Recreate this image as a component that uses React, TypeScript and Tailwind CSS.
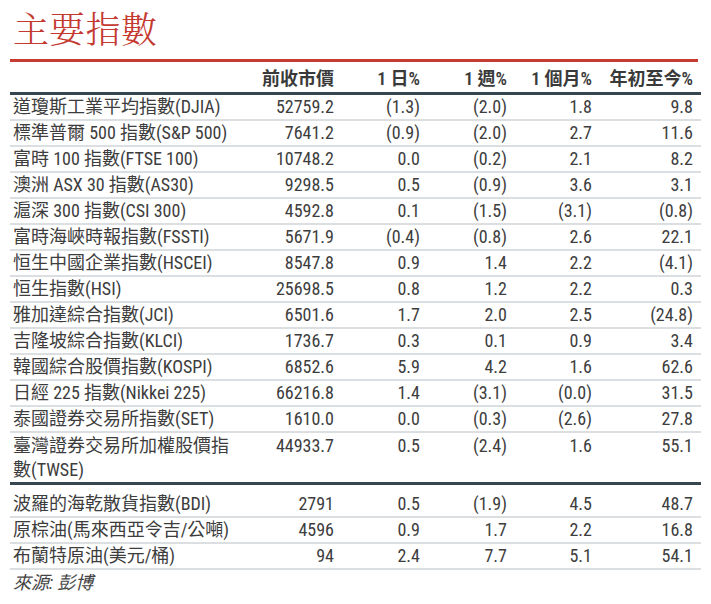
const rows = [
  ["道瓊斯工業平均指數(DJIA)", "52759.2", "(1.3)", "(2.0)", "1.8", "9.8"],
  ["標準普爾 500 指數(S&P 500)", "7641.2", "(0.9)", "(2.0)", "2.7", "11.6"],
  ["富時 100 指數(FTSE 100)", "10748.2", "0.0", "(0.2)", "2.1", "8.2"],
  ["澳洲 ASX 30 指數(AS30)", "9298.5", "0.5", "(0.9)", "3.6", "3.1"],
  ["滬深 300 指數(CSI 300)", "4592.8", "0.1", "(1.5)", "(3.1)", "(0.8)"],
  ["富時海峽時報指數(FSSTI)", "5671.9", "(0.4)", "(0.8)", "2.6", "22.1"],
  ["恒生中國企業指數(HSCEI)", "8547.8", "0.9", "1.4", "2.2", "(4.1)"],
  ["恒生指數(HSI)", "25698.5", "0.8", "1.2", "2.2", "0.3"],
  ["雅加達綜合指數(JCI)", "6501.6", "1.7", "2.0", "2.5", "(24.8)"],
  ["吉隆坡綜合指數(KLCI)", "1736.7", "0.3", "0.1", "0.9", "3.4"],
  ["韓國綜合股價指數(KOSPI)", "6852.6", "5.9", "4.2", "1.6", "62.6"],
  ["日經 225 指數(Nikkei 225)", "66216.8", "1.4", "(3.1)", "(0.0)", "31.5"],
  ["泰國證券交易所指數(SET)", "1610.0", "0.0", "(0.3)", "(2.6)", "27.8"],
];

const commodities = [
  ["波羅的海乾散貨指數(BDI)", "2791", "0.5", "(1.9)", "4.5", "48.7"],
  ["原棕油(馬來西亞令吉/公噸)", "4596", "0.9", "1.7", "2.2", "16.8"],
  ["布蘭特原油(美元/桶)", "94", "2.4", "7.7", "5.1", "54.1"],
];

const cols = "grid grid-cols-[228px_101px_86px_87px_85px_101px]";

function Row({ cells, extra = "" }: { cells: string[]; extra?: string }) {
  return (
    <div className={`${cols} border-b-2 border-[#dcdfe2] leading-[24px] ${extra}`}>
      <div className="pl-[3px] whitespace-nowrap">{cells[0]}</div>
      {cells.slice(1).map((c, i) => (
        <div key={i} className="pr-[5px] text-right">
          {c}
        </div>
      ))}
    </div>
  );
}

export default function App() {
  return (
    <div className="w-[711px] h-[604px] bg-white px-[10px] pt-[10px] text-[#3d3d3d] text-[18px] [font-stretch:75%] font-['Roboto','Noto_Sans_CJK_TC',sans-serif]">
      <h1 className="pl-[3px] text-[36px] leading-[36px] text-[#c43a31] font-['Noto_Serif_CJK_TC','Noto_Sans_CJK_TC',serif] font-light">
        主要指數
      </h1>
      <div className="mt-[13px] w-[688px] h-[3px] bg-[#c63b32]" />

      <div className={`${cols} pt-[5px] pb-[1px] leading-[24px] font-semibold text-[#3a3a3a] border-b-[3px] border-[#37474f]`}>
        <div />
        <div className="pr-[5px] text-right">前收市價</div>
        <div className="pr-[5px] text-right">1 日%</div>
        <div className="pr-[5px] text-right">1 週%</div>
        <div className="pr-[5px] text-right">1 個月%</div>
        <div className="pr-[5px] text-right">年初至今%</div>
      </div>

      {rows.map((r) => (
        <Row key={r[0]} cells={r} />
      ))}

      <div className={`${cols} leading-[24px] pt-px border-b-[3px] border-[#37474f]`}>
        <div className="pl-[3px]">臺灣證券交易所加權股價指數(TWSE)</div>
        {["44933.7", "0.5", "(2.4)", "1.6", "55.1"].map((c, i) => (
          <div key={i} className="pr-[5px] text-right">
            {c}
          </div>
        ))}
      </div>

      {commodities.map((r, i) => (
        <Row key={r[0]} cells={r} extra={i === 0 ? "pt-[7px]" : ""} />
      ))}

      <div className="pl-[3px] pt-[1px] leading-[24px] italic text-[#444]">來源: 彭博</div>
    </div>
  );
}
